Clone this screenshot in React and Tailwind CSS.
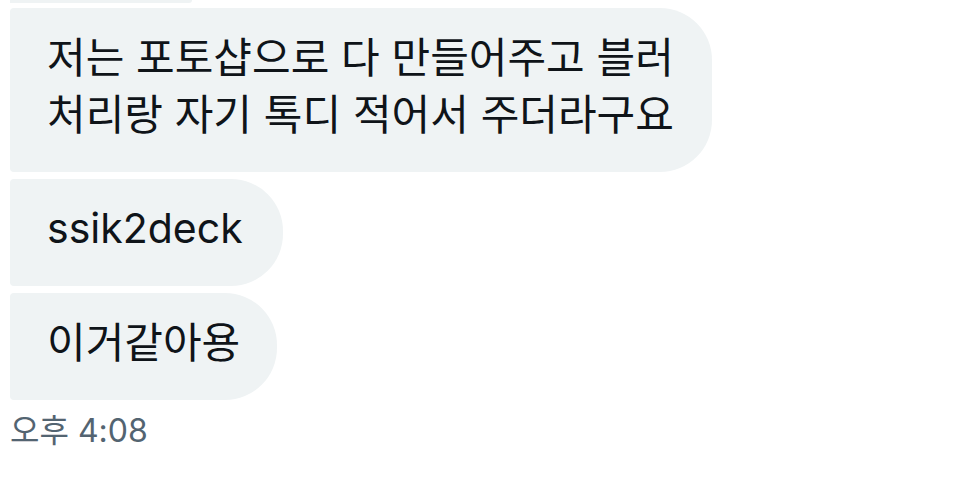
import React from 'react';

const messages = [
    { id: 1, lines: ['저는 포토샵으로 다 만들어주고 블러', '처리랑 자기 톡디 적어서 주더라구요'], width: 'w-[702px]', size: 'text-[42px]' },
    { id: 2, lines: ['ssik2deck'], width: 'w-[273px]', size: 'text-[41px]' },
    { id: 3, lines: ['이거같아용'], width: 'w-[267px]', size: 'text-[42px]' },
];

const Bubble = ({ lines, width, size }) => (
    <div className={`${width} ${size} bg-[#eff3f4] rounded-l-[4px] rounded-r-[52px] pl-[37px] pt-[21px] pb-[29px] text-[#0f1419] leading-[57px]`}>
        {lines.map((line, i) => (
            <div key={i} className="whitespace-nowrap">{line}</div>
        ))}
    </div>
);

export default function App() {
    return (
        <div
            className="w-[959px] h-[485px] bg-white overflow-hidden flex flex-col pl-[10px]"
            style={{ fontFamily: 'Inter, "Noto Sans CJK KR", sans-serif' }}
        >
            {/* bottom of the previous bubble */}
            <div className="w-[182px] h-[3px] bg-[#eff3f4] rounded-br-[8px]" />

            <div className="flex flex-col gap-[7px] mt-[5px]">
                {messages.map((m) => (
                    <Bubble key={m.id} lines={m.lines} width={m.width} size={m.size} />
                ))}
            </div>

            <div className="mt-[13px] text-[32px] leading-[36px] text-[#536471]">
                오후 4:08
            </div>
        </div>
    );
}
